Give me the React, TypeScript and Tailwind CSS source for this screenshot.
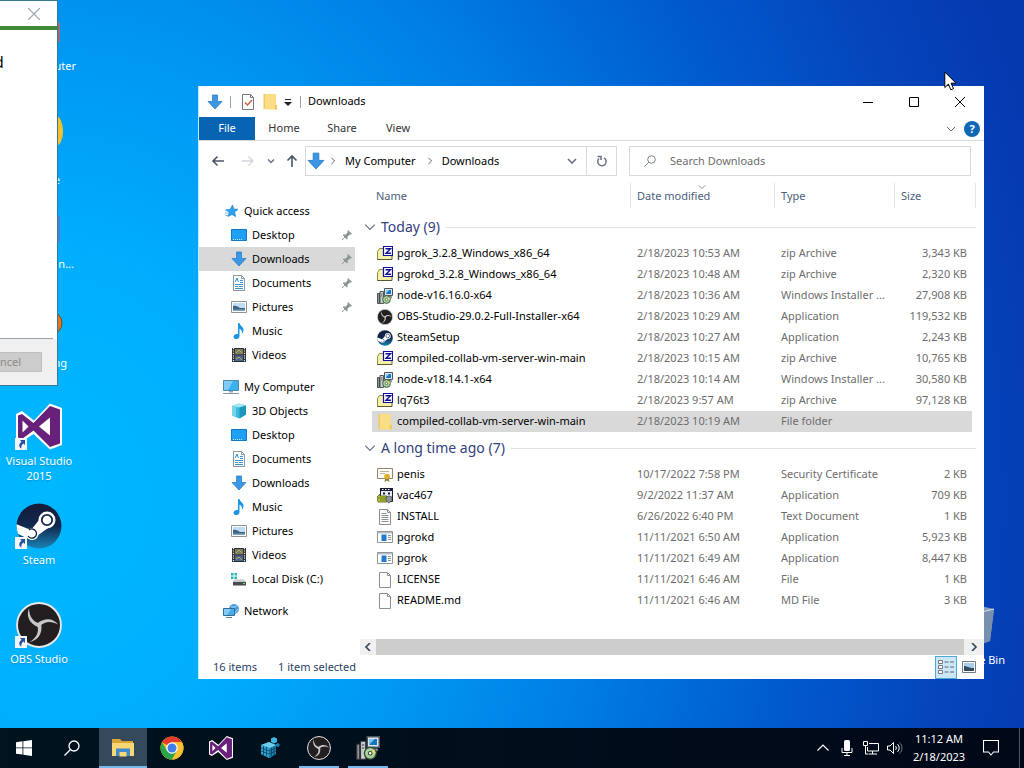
import type { ReactNode } from 'react'

type IconProps = { className?: string }

/* ---------- small icons ---------- */

function DownArrow({ className = 'h-4 w-4' }: IconProps) {
  return (
    <svg viewBox="0 0 16 16" className={className}>
      <path d="M5.500 1h5v6.500H15L8 15 1 7.500h4.500z" fill="#3b97e3" stroke="#2b7fc9" strokeWidth=".8" />
    </svg>
  )
}

function FolderIcon() {
  return (
    <svg viewBox="0 0 16 16" className="h-4 w-4">
      <path d="M1.500 0h11v15h-11z" fill="#f1c861" />
      <path d="M3 0h11v15.500H3z" fill="#fbdd85" />
      <path d="M12.500 11H15v4.500h-2.500z" fill="#f1c861" />
    </svg>
  )
}

function StarIcon() {
  return (
    <svg viewBox="0 0 16 16" className="h-4 w-4">
      <path d="M9.500 2l1.200 4 4.300.3-3.400 2.700 1 4.500L9 11.500 5 13.500l1.200-4L3 6.800l4.300-.6z" fill="#2ba3ee" stroke="#2383cc" strokeWidth=".7" />
      <path d="M2 10h3M2.500 12.500H5M2 7.500h2" stroke="#6bbcee" strokeWidth="1" />
    </svg>
  )
}

function DesktopIcon() {
  return (
    <svg viewBox="0 0 16 16" className="h-4 w-4">
      <path d="M.5 2.500h15v11H.5z" fill="#1ea0f4" stroke="#1379c4" />
      <path d="M2 12.500h10" stroke="#bfe4ff" strokeDasharray="1 1" />
    </svg>
  )
}

function PageIcon({ lines }: { lines?: boolean }) {
  return (
    <svg viewBox="0 0 16 16" className="h-4 w-4">
      <path d="M2.500.5h8l3 3v12h-11z" fill="#fdfdfd" stroke="#8f8f8f" />
      <path d="M10.500.5v3h3" fill="none" stroke="#8f8f8f" />
      {lines && <path d="M4.500 4.500h5M4.500 6.500h7M4.500 8.500h7M4.500 10.500h7M4.500 12.500h7" stroke="#8a8f94" />}
    </svg>
  )
}

function DocumentIcon() {
  return (
    <svg viewBox="0 0 16 16" className="h-4 w-4">
      <path d="M2.500.5h8l3 3v12h-11z" fill="#fff" stroke="#8796a5" />
      <path d="M10.500.5v3h3" fill="none" stroke="#8796a5" />
      <path d="M4 7l2-4 1.500 4" fill="none" stroke="#2b8ad0" />
      <path d="M9 5.500h3M9 7.500h3M4 9.500h8M4 11.500h3M8 11.500h4M4 13.500h8" stroke="#3a93d3" />
    </svg>
  )
}

function PictureIcon() {
  return (
    <svg viewBox="0 0 16 16" className="h-4 w-4">
      <path d="M.5 2.500h15v11H.5z" fill="#fff" stroke="#919191" />
      <path d="M2 4h12v8H2z" fill="#bfdcf3" />
      <path d="M2 7c3-1 5 1 7 2h5v3H2z" fill="#3f627f" />
      <path d="M2 10.500h12V12H2z" fill="#7ea6c4" />
    </svg>
  )
}

function MusicIcon() {
  return (
    <svg viewBox="0 0 16 16" className="h-4 w-4">
      <path d="M7 0h1.500c.3 3 4 3.500 4 7 0 2-1 3-1.700 3.800.6-3-.6-4.300-2.300-5V13c0 1.700-1.500 3-3.300 3S2.500 15 2.500 13.700 4 11 6 11c.4 0 .7 0 1 .1z" fill="#1e96e6" />
    </svg>
  )
}

function VideoIcon() {
  return (
    <svg viewBox="0 0 16 16" className="h-4 w-4">
      <path d="M1 1h14v14H1z" fill="#2d2d30" />
      <path d="M4 2h8v5.500H4z" fill="#777b62" />
      <path d="M4 8.500h8V14H4z" fill="#4b6794" />
      <path d="M5 6l3-3 3 3M5 12l3-2 3 3" fill="none" stroke="#b7ab5b" />
      <path d="M2.500 1v14M13.500 1v14" stroke="#e8e8e8" strokeWidth="1.200" strokeDasharray="1.200 1.200" />
    </svg>
  )
}

function ComputerIcon() {
  return (
    <svg viewBox="0 0 16 16" className="h-4 w-4">
      <path d="M.5 1.500h15v10H.5z" fill="#3db0ee" stroke="#4b87ac" />
      <path d="M1 2h9l-5 9H1z" fill="#7fcdf7" />
      <path d="M6 12h4v1.500H6z" fill="#9ab" />
      <path d="M0 14.500h16" stroke="#8499a7" />
    </svg>
  )
}

function CubeIcon() {
  return (
    <svg viewBox="0 0 16 16" className="h-4 w-4">
      <path d="M1 3l7-2.500 7 2v9L8 15.500 1 12.500z" fill="#3dbbdc" />
      <path d="M1 3l7-2.500 7 2-6.500 2z" fill="#a4e6f3" />
      <path d="M8.500 4.500l6.500-2v9l-6.500 4z" fill="#1b96bd" />
      <path d="M1 3l4 1v10l-4-1.500z" fill="#79d4ea" />
    </svg>
  )
}

function DiskIcon() {
  return (
    <svg viewBox="0 0 16 16" className="h-4 w-4">
      <path d="M0 2h2.500v2.500H0zM3.500 2H6v2.500H3.500zM0 5.500h2.500V8H0zM3.500 5.500H6V8H3.500z" fill="#22b5b5" />
      <path d="M3 8.500h10l2 2.500H2z" fill="#c4c9cc" />
      <path d="M2 11h13v3.500H2z" fill="#454b4f" />
      <path d="M12 12.500h2" stroke="#6ee06e" />
    </svg>
  )
}

function NetworkIcon() {
  return (
    <svg viewBox="0 0 16 16" className="h-4 w-4">
      <circle cx="11" cy="6" r="5" fill="#4a9fd8" />
      <path d="M8 3.500c2 1 4 1 6-1M9 10c3 0 5-2 6-4" stroke="#b5dcf5" fill="none" />
      <path d="M.5 5.500h11v7H.5z" fill="#49aee8" stroke="#2c6e9e" />
      <path d="M1 6h7l-4 6H1z" fill="#86cdf4" />
      <path d="M3 14.500h6" stroke="#5b8099" />
    </svg>
  )
}

function PinIcon() {
  return (
    <svg viewBox="0 0 12 12" className="h-3 w-3">
      <path d="M7 1l4 4-1 .6-1.200-.2L6.500 7.800l.2 2L6 10.500 1.800 6.200l.7-.7 2 .2L6.700 3.300 6.400 2z" fill="#8b9499" />
      <path d="M4 8L1 11" stroke="#8b9499" />
    </svg>
  )
}

function ZipIcon() {
  return (
    <svg viewBox="0 0 16 16" className="h-4 w-4">
      <path d="M.5 5.500L2.500 2.500H7v11H.5z" fill="#f4f0a8" stroke="#8e8a48" />
      <path d="M3 5h11.500v8H3z" fill="#f4f0a8" />
      <path d="M.5 13.500h14.500V10" fill="none" stroke="#5c582c" />
      <path d="M6.500.5h9v9h-9z" fill="#fff" stroke="#10109c" strokeWidth="1.200" />
      <path d="M8.500 2.700h5L9 7.300h5" fill="none" stroke="#10109c" strokeWidth="1.400" />
    </svg>
  )
}

function InstallerIcon({ className = 'h-4 w-4' }: IconProps) {
  return (
    <svg viewBox="0 0 16 16" className={className}>
      <path d="M7.500.5h8v7h-8z" fill="#dfe5ea" stroke="#46545d" />
      <path d="M9 2h5v4H9z" fill="#1176c4" />
      <path d="M9 2h3.500L9 5.500z" fill="#7ccaf5" />
      <path d="M8.500 8.500h6v1.500h-6z" fill="#aab2b8" stroke="#4a555c" strokeWidth=".5" />
      <path d="M.5 5.500h2v10h-2z" fill="#8e979d" stroke="#333" strokeWidth=".8" />
      <path d="M3 3.500h3.500v12H3z" fill="#c9cfd3" stroke="#333" strokeWidth=".8" />
      <path d="M4 6h1.500M4 8h1.500" stroke="#333" strokeWidth=".7" />
      <circle cx="9.500" cy="11.500" r="3.900" fill="#a9cf9c" stroke="#355234" strokeWidth=".9" />
      <path d="M9.500 11.500l2.600-2.600 1.200 2.600z" fill="#eadb72" />
      <circle cx="9.500" cy="11.500" r="1.200" fill="#fff" stroke="#2d4d2d" strokeWidth=".7" />
    </svg>
  )
}

function CertificateIcon() {
  return (
    <svg viewBox="0 0 16 16" className="h-4 w-4">
      <path d="M.5 1.500h15v10H.5z" fill="#fffdf5" stroke="#96836a" />
      <path d="M3 4.500h9M3 6.500h5" stroke="#b9b1a6" />
      <path d="M8.500 10l-1 5 2.500-1.500 2.500 1.500-1-5z" fill="#8a7a33" />
      <circle cx="10" cy="9.500" r="2.800" fill="#e0ac2b" />
    </svg>
  )
}

function SetupIcon() {
  return (
    <svg viewBox="0 0 16 16" className="h-4 w-4">
      <path d="M3.500.5h12v13h-12z" fill="#e8ebef" stroke="#181c38" />
      <path d="M3 0h13v3H3z" fill="#181c38" />
      <path d="M5 1.500h1.500M8 1.500h1.500M11 1.500h1.500" stroke="#fff" />
      <path d="M6 4.500h2v2H6zM11 4.500h2v2h-2z" fill="#181c38" />
      <path d="M0 9l3-3v2h7v6H1z" fill="#bccb35" stroke="#4e5716" strokeWidth=".8" />
      <path d="M1 10h8M3 12h6" stroke="#666e20" />
      <path d="M9 9l3-1 3 1c0 3-1 5-3 6-2-1-3-3-3-6z" fill="#8e9499" stroke="#44484d" strokeWidth=".7" />
    </svg>
  )
}

function AppIcon() {
  return (
    <svg viewBox="0 0 16 16" className="h-4 w-4">
      <path d="M.5 1.500h15v11H.5z" fill="#fff" stroke="#8d959b" />
      <path d="M1 2h14v1.500H1z" fill="#b9c0c5" />
      <path d="M4.500 4.500h5v6.500h-5z" fill="#1f7ad0" />
      <path d="M11 5.500h3M11 7.500h3M11 9.500h3" stroke="#8d959b" />
    </svg>
  )
}

/* ---------- app logos ---------- */

function VisualStudioLogo({ className }: IconProps) {
  return (
    <svg viewBox="0 0 46 46" className={className}>
      <path d="M34 0l12 4.500v37L34 46 17.500 30.500 5.500 38.500 0 35.500V10.500L6 7.500l12 9.500z" fill="#fff" />
      <path d="M34 2.500l10 3.500v34l-10 3.500L17.500 27 6 35.500l-4-1.500V12l4-1.500 11.500 9z" fill="#68217a" />
      <path d="M34 14v18L23 23zM6.500 17v12l6-6z" fill="#fff" />
    </svg>
  )
}

function SteamLogo({ className }: IconProps) {
  return (
    <svg viewBox="0 0 46 46" className={className}>
      <defs>
        <linearGradient id="steam" x1="0" y1="0" x2="0" y2="1">
          <stop offset="0" stopColor="#161c3a" />
          <stop offset=".5" stopColor="#10284f" />
          <stop offset="1" stopColor="#1a86b8" />
        </linearGradient>
        <clipPath id="steam-clip">
          <circle cx="23" cy="23" r="22.500" />
        </clipPath>
      </defs>
      <g clipPath="url(#steam-clip)">
        <path d="M0 0h46v46H0z" fill="url(#steam)" />
        <path d="M0 21l15 6 8-10 9 8-11 8-6 4-15-7z" fill="#fff" />
        <circle cx="31" cy="17" r="8.500" fill="#fff" />
        <circle cx="31" cy="17" r="5.200" fill="#fff" stroke="#14264b" strokeWidth="1.800" />
        <circle cx="16.500" cy="31" r="6" fill="#fff" />
        <path d="M13 27a4.600 4.600 0 1 1-1 6" fill="none" stroke="#14264b" strokeWidth="1.300" />
      </g>
    </svg>
  )
}

function ObsLogo({ className }: IconProps) {
  const blade = 'M12.500 6C9.500 13 12.500 20.500 21 24L23 20.500C16.500 19.500 12.500 14 12.500 6z'
  return (
    <svg viewBox="0 0 44 44" className={className}>
      <circle cx="22" cy="22" r="21" fill="#231f20" stroke="#e8e8e8" strokeWidth="1.800" />
      <g fill="#c9c7c7">
        <path d={blade} />
        <path d={blade} transform="rotate(120 22 22)" />
        <path d={blade} transform="rotate(240 22 22)" />
      </g>
    </svg>
  )
}

function ChromeLogo({ className }: IconProps) {
  return (
    <svg viewBox="0 0 48 48" className={className}>
      <circle cx="24" cy="24" r="23" fill="#fbc02d" />
      <path d="M24 24L4.100 12.500A23 23 0 0 1 43.900 12.500H24z" fill="#e33b2e" />
      <path d="M4.100 12.500A23 23 0 0 0 24 47L34 29.700 24 24 14 29.700z" fill="#2ba24c" />
      <path d="M24 47A23 23 0 0 0 43.900 12.500H24l10 17.200z" fill="#fbc02d" />
      <circle cx="24" cy="24" r="11.500" fill="#fff" />
      <circle cx="24" cy="24" r="9" fill="#3f7de8" />
    </svg>
  )
}

function ExplorerLogo() {
  return (
    <svg viewBox="0 0 24 24" className="h-6 w-6">
      <path d="M1 3h8l2 2h11v4H1z" fill="#d9a43a" />
      <path d="M1 7h22v13H1z" fill="#f9d775" />
      <path d="M5 12.500h14V20H5z" fill="#3f8ccb" />
      <path d="M8.500 16h7v4.500h-7z" fill="#f9d775" />
    </svg>
  )
}

function RegistryLogo() {
  return (
    <svg viewBox="0 0 24 24" className="h-6 w-6">
      <path d="M3 9l8-3 7 3v9l-6 4-9-4z" fill="#1a7fae" />
      <path d="M3 9l8-3 7 3-6 3z" fill="#6ecdec" />
      <path d="M3 9l8 3v10l-8-4z" fill="#2fa4d3" />
      <path d="M3 12l8 3 7-3M3 15l8 3 7-3M5.500 10v9M8.500 11v9M13.500 11.500v9M16 10.500v9" stroke="#0c405f" strokeWidth=".8" fill="none" />
      <path d="M13 2.500L16 1l3 1.500V6l-3 1.500L13 6z" fill="#3bb5e2" />
      <path d="M18 8l2-1 1.500 1v2L20 11l-2-1z" fill="#1a7fae" />
    </svg>
  )
}

function ShortcutArrow() {
  return (
    <svg viewBox="0 0 12 12" className="absolute bottom-0 -left-px h-3 w-3">
      <path d="M0 0h12v12H0z" fill="#f4f7fa" />
      <path d="M5 2h5v5L8.300 5.500C6.500 7 6 8.500 6.500 10.500 3.500 9 3.500 6 6.500 3.700z" fill="#27509e" />
    </svg>
  )
}

function Chevron({ className = '', d = 'M1 3l4 4 4-4' }: IconProps & { d?: string }) {
  return (
    <svg viewBox="0 0 10 10" className={className} fill="none" stroke="currentColor">
      <path d={d} />
    </svg>
  )
}

/* ---------- data ---------- */

type FileRow = {
  name: string
  date: string
  type: string
  size: string
  icon: ReactNode
  selected?: boolean
}

const groups: { title: string; rows: FileRow[] }[] = [
  {
    title: 'Today (9)',
    rows: [
      { name: 'pgrok_3.2.8_Windows_x86_64', date: '2/18/2023 10:53 AM', type: 'zip Archive', size: '3,343 KB', icon: <ZipIcon /> },
      { name: 'pgrokd_3.2.8_Windows_x86_64', date: '2/18/2023 10:48 AM', type: 'zip Archive', size: '2,320 KB', icon: <ZipIcon /> },
      { name: 'node-v16.16.0-x64', date: '2/18/2023 10:36 AM', type: 'Windows Installer ...', size: '27,908 KB', icon: <InstallerIcon /> },
      { name: 'OBS-Studio-29.0.2-Full-Installer-x64', date: '2/18/2023 10:29 AM', type: 'Application', size: '119,532 KB', icon: <ObsLogo className="h-4 w-4" /> },
      { name: 'SteamSetup', date: '2/18/2023 10:27 AM', type: 'Application', size: '2,243 KB', icon: <SteamLogo className="h-4 w-4" /> },
      { name: 'compiled-collab-vm-server-win-main', date: '2/18/2023 10:15 AM', type: 'zip Archive', size: '10,765 KB', icon: <ZipIcon /> },
      { name: 'node-v18.14.1-x64', date: '2/18/2023 10:14 AM', type: 'Windows Installer ...', size: '30,580 KB', icon: <InstallerIcon /> },
      { name: 'lq76t3', date: '2/18/2023 9:57 AM', type: 'zip Archive', size: '97,128 KB', icon: <ZipIcon /> },
      { name: 'compiled-collab-vm-server-win-main', date: '2/18/2023 10:19 AM', type: 'File folder', size: '', icon: <FolderIcon />, selected: true },
    ],
  },
  {
    title: 'A long time ago (7)',
    rows: [
      { name: 'penis', date: '10/17/2022 7:58 PM', type: 'Security Certificate', size: '2 KB', icon: <CertificateIcon /> },
      { name: 'vac467', date: '9/2/2022 11:37 AM', type: 'Application', size: '709 KB', icon: <SetupIcon /> },
      { name: 'INSTALL', date: '6/26/2022 6:40 PM', type: 'Text Document', size: '1 KB', icon: <PageIcon lines /> },
      { name: 'pgrokd', date: '11/11/2021 6:50 AM', type: 'Application', size: '5,923 KB', icon: <AppIcon /> },
      { name: 'pgrok', date: '11/11/2021 6:49 AM', type: 'Application', size: '8,447 KB', icon: <AppIcon /> },
      { name: 'LICENSE', date: '11/11/2021 6:46 AM', type: 'File', size: '1 KB', icon: <PageIcon /> },
      { name: 'README.md', date: '11/11/2021 6:46 AM', type: 'MD File', size: '3 KB', icon: <PageIcon /> },
    ],
  },
]

type NavItem = { label: string; icon: ReactNode; pinned?: boolean; active?: boolean }

const navSections: { root: NavItem; items: NavItem[] }[] = [
  {
    root: { label: 'Quick access', icon: <StarIcon /> },
    items: [
      { label: 'Desktop', icon: <DesktopIcon />, pinned: true },
      { label: 'Downloads', icon: <DownArrow />, pinned: true, active: true },
      { label: 'Documents', icon: <DocumentIcon />, pinned: true },
      { label: 'Pictures', icon: <PictureIcon />, pinned: true },
      { label: 'Music', icon: <MusicIcon /> },
      { label: 'Videos', icon: <VideoIcon /> },
    ],
  },
  {
    root: { label: 'My Computer', icon: <ComputerIcon /> },
    items: [
      { label: '3D Objects', icon: <CubeIcon /> },
      { label: 'Desktop', icon: <DesktopIcon /> },
      { label: 'Documents', icon: <DocumentIcon /> },
      { label: 'Downloads', icon: <DownArrow /> },
      { label: 'Music', icon: <MusicIcon /> },
      { label: 'Pictures', icon: <PictureIcon /> },
      { label: 'Videos', icon: <VideoIcon /> },
      { label: 'Local Disk (C:)', icon: <DiskIcon /> },
    ],
  },
  { root: { label: 'Network', icon: <NetworkIcon /> }, items: [] },
]

/* ---------- explorer ---------- */

function TitleBar() {
  return (
    <header className="flex h-[31px] items-center pr-px pl-2">
      <DownArrow className="h-4 w-4" />
      <span className="ml-[7px] h-3 w-px bg-gray-400" />
      <button type="button" aria-label="Properties" className="ml-[9px]">
        <svg viewBox="0 0 16 16" className="h-4 w-4">
          <path d="M2.500.5h8l3 3v12h-11z" fill="#fff" stroke="#777" />
          <path d="M10.500.5v3h3" fill="none" stroke="#777" />
          <path d="M5 8.500l2.500 2.500L12 6" fill="none" stroke="#c9623e" strokeWidth="1.500" />
        </svg>
      </button>
      <button type="button" aria-label="New folder" className="ml-[6px]">
        <FolderIcon />
      </button>
      <button type="button" aria-label="Customize toolbar" className="ml-[6px]">
        <svg viewBox="0 0 8 8" className="h-2 w-2">
          <path d="M1 1.500h6" stroke="#222" />
          <path d="M0 4h8L4 8z" fill="#222" />
        </svg>
      </button>
      <span className="ml-2 h-3 w-px bg-gray-400" />
      <h1 className="ml-[7px] flex-1 text-black">Downloads</h1>
      <div className="flex items-center text-black">
        {[
          ['Minimize', 'M0 5.500h10'],
          ['Maximize', 'M.5.5h9v9h-9z'],
          ['Close', 'M0 0l10 10M10 0L0 10'],
        ].map(([label, d]) => (
          <button key={label} type="button" aria-label={label} className="flex h-[31px] w-[46px] items-center justify-center">
            <Chevron className="h-[10px] w-[10px]" d={d} />
          </button>
        ))}
      </div>
    </header>
  )
}

function RibbonTabs() {
  return (
    <nav className="flex h-6 items-stretch border-b border-[#dadbdc]">
      <button type="button" className="w-14 bg-[#0764b3] text-white">File</button>
      <button type="button" className="w-[58px] text-[#333]">Home</button>
      <button type="button" className="w-[58px] text-[#333]">Share</button>
      <button type="button" className="w-[54px] text-[#333]">View</button>
      <div className="ml-auto flex items-center gap-2 pr-1">
        <Chevron className="h-[10px] w-[10px] text-gray-500" />
        <button type="button" aria-label="Help" className="h-4 w-4 rounded-full bg-[#0f68b5] text-center font-bold text-white">
          ?
        </button>
      </div>
    </nav>
  )
}

function AddressBar() {
  return (
    <div className="flex h-[42px] items-start pt-[5px] pr-[13px]">
      <div className="flex h-[30px] w-[106px] shrink-0 items-center pl-3 text-gray-600">
        <button type="button" aria-label="Back">
          <svg viewBox="0 0 14 14" className="h-[14px] w-[14px]" fill="none" stroke="currentColor" strokeWidth="1.600">
            <path d="M13 7H2M6.500 2.500L2 7l4.500 4.500" />
          </svg>
        </button>
        <button type="button" aria-label="Forward" className="ml-4 text-gray-300">
          <svg viewBox="0 0 14 14" className="h-[14px] w-[14px]" fill="none" stroke="currentColor" strokeWidth="1.300">
            <path d="M1 7h11M7.500 2.500L12 7l-4.500 4.500" />
          </svg>
        </button>
        <button type="button" aria-label="Recent locations" className="ml-3 text-gray-500">
          <svg viewBox="0 0 8 8" className="h-2 w-2" fill="none" stroke="currentColor" strokeWidth="1.500">
            <path d="M1 2.500l3 3 3-3" />
          </svg>
        </button>
        <button type="button" aria-label="Up" className="ml-[10px]">
          <svg viewBox="0 0 14 14" className="h-[14px] w-[14px]" fill="none" stroke="currentColor" strokeWidth="1.600">
            <path d="M7 13V2M2.500 6.500L7 2l4.500 4.500" />
          </svg>
        </button>
      </div>
      <div className="flex h-[30px] w-[312px] items-center border border-[#d9d9d9] text-black">
        <DownArrow className="ml-px h-[18px] w-[18px]" />
        <Chevron className="ml-1 h-2 w-2 text-gray-700" d="M3 1l4 4-4 4" />
        <button type="button" className="ml-2">My Computer</button>
        <Chevron className="ml-[10px] h-2 w-2 text-gray-700" d="M3 1l4 4-4 4" />
        <button type="button" className="ml-2">Downloads</button>
        <button type="button" aria-label="Previous locations" className="mr-[9px] ml-auto text-gray-500">
          <svg viewBox="0 0 10 10" className="h-[10px] w-[10px]" fill="none" stroke="currentColor" strokeWidth="1.600">
            <path d="M1 3l4 4 4-4" />
          </svg>
        </button>
        <button type="button" aria-label="Refresh" className="flex h-full w-[30px] items-center justify-center border-l border-[#d9d9d9] text-gray-500">
          <svg viewBox="0 0 12 12" className="h-3 w-3" fill="none" stroke="currentColor" strokeWidth="1.500">
            <path d="M3 3.500A4.200 4.200 0 1 0 8 2.800" />
            <path d="M1.500 1.500h3.500V5" />
          </svg>
        </button>
      </div>
      <label className="ml-3 flex h-[30px] flex-1 items-center border border-[#d9d9d9] pl-[14px] text-gray-500">
        <svg viewBox="0 0 12 12" className="h-3 w-3 shrink-0" fill="none" stroke="currentColor" strokeWidth=".9">
          <circle cx="7.500" cy="4.500" r="3.800" />
          <path d="M4.700 7.300L.5 11.500" />
        </svg>
        <input type="search" aria-label="Search Downloads" placeholder="Search Downloads" className="ml-[14px] w-full bg-transparent outline-none placeholder:text-[#6d6d6d]" />
      </label>
    </div>
  )
}

function NavPane() {
  return (
    <nav className="flex w-[161px] shrink-0 flex-col gap-2 pt-4 pr-[5px] text-black">
      {navSections.map((section) => (
        <div key={section.root.label}>
          <a href="#" className="flex h-6 items-center gap-[5px] pl-6">
            {section.root.icon}
            {section.root.label}
          </a>
          {section.items.map((item) => (
            <a key={item.label} href="#" className={`flex h-6 items-center gap-[5px] pr-[2px] pl-8 ${item.active ? 'bg-[#d9d9d9]' : ''}`}>
              {item.icon}
              <span className="flex-1">{item.label}</span>
              {item.pinned && <PinIcon />}
            </a>
          ))}
        </div>
      ))}
    </nav>
  )
}

function FileTable() {
  return (
    <table className="ml-3 table-fixed border-collapse text-left text-[#6d6d6d]">
      <colgroup>
        <col />
        <col className="w-36" />
        <col className="w-[120px]" />
        <col className="w-[77px]" />
        <col className="w-1" />
      </colgroup>
      <thead className="text-[#4c607a]">
        <tr className="h-7 align-top">
          <th className="p-0 font-normal">
            <div className="h-[25px] border-r border-[#e5e5e5] pl-1 leading-[25px]">Name</div>
          </th>
          <th className="relative p-0 font-normal">
            <Chevron className="absolute top-0 left-[67px] h-2 w-2 text-gray-500" />
            <div className="h-[25px] border-r border-[#e5e5e5] pl-[6px] leading-[25px]">Date modified</div>
          </th>
          <th className="p-0 font-normal">
            <div className="h-[25px] border-r border-[#e5e5e5] pl-[6px] leading-[25px]">Type</div>
          </th>
          <th className="p-0 font-normal">
            <div className="h-[25px] pl-[6px] leading-[25px]">Size</div>
          </th>
          <td className="p-0">
            <div className="h-[25px] border-r border-[#e5e5e5]" />
          </td>
        </tr>
      </thead>
      {groups.map((group) => (
        <tbody key={group.title}>
          <tr className="h-8">
            <th colSpan={5} className="p-0 font-normal">
              <div className="-ml-2 flex items-center text-sm text-[#33417e]">
                <Chevron className="mr-[5px] h-3 w-3 text-gray-500" />
                {group.title}
                <span className="ml-[6px] h-px flex-1 bg-[#e2e2e2]" />
              </div>
            </th>
          </tr>
          {group.rows.map((row) => (
            <tr key={row.name + row.date} className="h-[21px]">
              <td className={`p-0 ${row.selected ? 'bg-[#d9d9d9]' : ''}`}>
                <div className="flex items-center gap-1 pl-[5px] text-black">
                  {row.icon}
                  {row.name}
                </div>
              </td>
              <td className={`p-0 pl-[6px] ${row.selected ? 'bg-[#d9d9d9]' : ''}`}>{row.date}</td>
              <td className={`p-0 pl-[6px] whitespace-nowrap ${row.selected ? 'bg-[#d9d9d9]' : ''}`}>{row.type}</td>
              <td className={`p-0 pr-[5px] text-right ${row.selected ? 'bg-[#d9d9d9]' : ''}`}>{row.size}</td>
              <td className="p-0" />
            </tr>
          ))}
        </tbody>
      ))}
    </table>
  )
}

function ExplorerWindow() {
  return (
    <section className="absolute top-[86px] right-10 left-[198px] border-l border-[#b5f0ff] bg-white">
      <TitleBar />
      <RibbonTabs />
      <AddressBar />
      <div className="flex">
        <NavPane />
        <div className="flex min-w-0 flex-1 flex-col">
          <div className="grid pr-2">
            <FileTable />
          </div>
          <div className="mt-7 flex h-4 bg-[#f0f0f0] text-gray-700">
            <button type="button" aria-label="Scroll left" className="flex w-4 items-center justify-center">
              <svg viewBox="0 0 8 8" className="h-2 w-2" fill="none" stroke="currentColor" strokeWidth="1.600">
                <path d="M6 0L2 4l4 4" />
              </svg>
            </button>
            <div className="flex-1 bg-[#cdcdcd]" />
            <button type="button" aria-label="Scroll right" className="flex w-5 items-center justify-center">
              <svg viewBox="0 0 8 8" className="h-2 w-2" fill="none" stroke="currentColor" strokeWidth="1.600">
                <path d="M2 0l4 4-4 4" />
              </svg>
            </button>
          </div>
        </div>
      </div>
      <footer className="flex h-6 items-center pr-[6px] pl-[14px] text-[#2c3f64]">
        <span>16 items</span>
        <span className="ml-[21px] flex-1">1 item selected</span>
        <button type="button" aria-label="Details view" className="flex h-[23px] w-[22px] items-center justify-center border border-[#4fa8d8] bg-[#cce8f8]">
          <svg viewBox="0 0 16 14" className="h-[14px] w-4" fill="none">
            <path d="M.5.5h4v3h-4zM.5 5.500h4v3h-4zM.5 10.500h4v3h-4z" fill="#fff" stroke="#777" />
            <path d="M6.500 2h4M6.500 7h4M6.500 12h4M12 2h4M12 7h4M12 12h4" stroke="#5b6670" />
          </svg>
        </button>
        <button type="button" aria-label="Large icons view" className="ml-[3px] flex w-[18px] justify-center">
          <svg viewBox="0 0 14 12" className="h-3 w-[14px]">
            <path d="M.5.5h13v11H.5z" fill="#fff" stroke="#6f7a86" />
            <path d="M2 2h10v8H2z" fill="#a9cdea" />
            <path d="M2 5c3 0 4 2 10 2v3H2z" fill="#2f4a63" />
          </svg>
        </button>
      </footer>
    </section>
  )
}

/* ---------- desktop ---------- */

function InstallerDialog() {
  return (
    <section className="absolute top-0 left-0 flex h-[386px] w-[58px] flex-col overflow-hidden border-t border-r border-b border-[#3a7896] bg-white">
      <div className="flex h-[25px] items-center justify-end pr-[17px]">
        <button type="button" aria-label="Close dialog" className="text-gray-400">
          <Chevron className="h-3 w-3" d="M0 0l10 10M10 0L0 10" />
        </button>
      </div>
      <div className="h-1 bg-[#3f8b34]" />
      <p className="-ml-[6px] flex-1 pt-5 font-['Open_Sans',sans-serif] text-base text-black">d</p>
      <div className="mr-1 h-px bg-gray-400" />
      <div className="flex h-[46px] items-center justify-end bg-[#f0f0f0] pr-[15px]">
        <button type="button" disabled className="h-5 w-[76px] shrink-0 border border-[#bfbfbf] bg-[#cccccc] text-[#8a8a8a]">
          Cancel
        </button>
      </div>
    </section>
  )
}

function Shortcut({ label, logo, className }: { label: string; logo: ReactNode; className: string }) {
  return (
    <button type="button" className={`absolute left-0 flex w-[78px] flex-col items-center gap-[3px] text-white ${className}`}>
      <span className="relative">
        {logo}
        <ShortcutArrow />
      </span>
      <span className="w-full px-1 leading-[15px] text-shadow-sm">{label}</span>
    </button>
  )
}

function Desktop() {
  return (
    <main className="relative flex-1 overflow-hidden">
      {/* shortcuts that peek out from behind the dialog */}
      <svg viewBox="0 0 10 330" className="absolute top-4 left-[55px] h-[330px] w-[10px]">
        <path d="M0 6h5v20H0z" fill="#777f99" />
        <path d="M3 8h1v17H3z" fill="#bf5a4a" />
        <ellipse cx="1" cy="115" rx="7" ry="15" fill="#f3c32f" />
        <path d="M0 200h5v26H0z" fill="#4c83cf" />
        <circle cx="-5" cy="307" r="12" fill="#e07a22" stroke="#6b4a2a" />
      </svg>
      <div className="absolute top-[58px] left-0 w-[76px] text-right leading-4 text-white">My Computer</div>
      <div className="absolute top-[172px] left-0 w-[60px] text-right leading-4 text-white">Chrome</div>
      <div className="absolute top-[256px] left-0 w-[74px] text-right leading-4 text-white">n...</div>
      <div className="absolute top-[355px] left-0 w-[67px] text-right leading-4 text-white">ng</div>

      <Shortcut label="Visual Studio 2015" logo={<VisualStudioLogo className="h-[47px] w-[46px]" />} className="top-[403px]" />
      <Shortcut label="Steam" logo={<SteamLogo className="h-[46px] w-[46px]" />} className="top-[503px]" />
      <Shortcut label="OBS Studio" logo={<ObsLogo className="h-[46px] w-[46px]" />} className="top-[602px]" />

      <svg viewBox="0 0 36 40" className="absolute top-[606px] right-[30px] h-10 w-9">
        <path d="M2 3l20-3 14 3-4 32-12 4L6 36z" fill="#8d9db4" />
        <path d="M24 5l12-2-4 32-8 3z" fill="#7790ae" />
        <path d="M2 3l22 3 12-3" fill="none" stroke="#d6e0ea" />
      </svg>
      <div className="absolute top-[652px] right-[19px] leading-4 text-white">Recycle Bin</div>

      <InstallerDialog />
      <ExplorerWindow />

      <svg viewBox="0 0 13 20" className="absolute top-[71px] left-[944px] h-5 w-[13px]">
        <path d="M.8 1v15.500l3.600-3.400 2.400 5.700 2.700-1.200-2.400-5.400H12z" fill="#fff" stroke="#000" />
      </svg>
    </main>
  )
}

function TaskButton({ label, children, state = '' }: { label: string; children: ReactNode; state?: string }) {
  return (
    <button type="button" aria-label={label} className={`flex h-10 w-12 flex-col items-center justify-center ${state === 'active' ? 'bg-[#34495a]' : ''}`}>
      <span className="flex flex-1 items-center pt-[2px]">{children}</span>
      <span className={`h-[2px] ${state === 'active' ? 'w-12 bg-[#76b9ed]' : ''} ${state === 'open' ? 'w-10 bg-[#76b9ed]' : ''}`} />
    </button>
  )
}

function Taskbar() {
  return (
    <footer className="flex h-10 items-center bg-linear-to-r from-[#00131f] to-[#010818] text-white">
      <TaskButton label="Start">
        <svg viewBox="0 0 16 16" className="h-4 w-4" fill="#fff">
          <path d="M0 2.200l6.500-.9v6.200H0zM7.300 1.200L16 0v7.500H7.300zM0 8.300h6.500v6.300L0 13.700zM7.300 8.300H16V16l-8.700-1.200z" />
        </svg>
      </TaskButton>
      <TaskButton label="Search">
        <svg viewBox="0 0 16 16" className="h-4 w-4" fill="none" stroke="#fff" strokeWidth="1.300">
          <circle cx="10" cy="6" r="5" />
          <path d="M6.500 9.500L.5 15.500" />
        </svg>
      </TaskButton>
      <div className="ml-[3px] flex gap-px">
        <TaskButton label="File Explorer" state="active"><ExplorerLogo /></TaskButton>
        <TaskButton label="Google Chrome"><ChromeLogo className="h-6 w-6" /></TaskButton>
        <TaskButton label="Visual Studio"><VisualStudioLogo className="h-6 w-6" /></TaskButton>
        <TaskButton label="Registry Editor"><RegistryLogo /></TaskButton>
        <TaskButton label="OBS Studio" state="open"><ObsLogo className="h-6 w-6" /></TaskButton>
        <TaskButton label="Installer" state="open"><InstallerIcon className="h-6 w-6" /></TaskButton>
      </div>
      <div className="ml-auto flex h-full items-center">
        <button type="button" aria-label="Show hidden icons" className="w-6">
          <svg viewBox="0 0 12 12" className="mx-auto h-3 w-3" fill="none" stroke="#fff" strokeWidth="1.200">
            <path d="M.5 8.500L6 3l5.500 5.500" />
          </svg>
        </button>
        <button type="button" aria-label="Microphone" className="w-6">
          <svg viewBox="0 0 12 16" className="mx-auto h-4 w-3" fill="none" stroke="#fff">
            <rect x="3" y="0" width="6" height="11" rx="1.500" fill="#fff" stroke="none" />
            <path d="M1 8v4.500h10V8M6 13v3M3 15.500h6" />
          </svg>
        </button>
        <button type="button" aria-label="Network status" className="w-6">
          <svg viewBox="0 0 16 14" className="mx-auto h-[14px] w-4" fill="none" stroke="#fff">
            <path d="M6 2.500h9.500v7.500h-11V6M9.500 10v3M6 13h8" />
            <path d="M.5.500h4v4h-4zM2.500 4.500V13h3" />
          </svg>
        </button>
        <button type="button" aria-label="Volume" className="w-6">
          <svg viewBox="0 0 16 14" className="mx-auto h-[14px] w-4" fill="none" stroke="#fff">
            <path d="M.5 5v4h2.500l3.500 3.500v-11L3 5zM8.500 5c1 1 1 3 0 4M10.500 3.200c2.200 2 2.200 5.500 0 7.600" />
            <path d="M12.500 1.500c3.300 3 3.300 8 0 11" stroke="#6c7680" />
          </svg>
        </button>
        <time className="mr-[2px] w-16 text-center leading-[18px]">
          11:12 AM
          <br />
          2/18/2023
        </time>
        <button type="button" aria-label="Notifications" className="w-9">
          <svg viewBox="0 0 16 16" className="mx-auto h-4 w-4" fill="none" stroke="#fff" strokeWidth="1.100">
            <path d="M.5.5h15v11.500h-5L8 15l-2.500-3h-5z" />
          </svg>
        </button>
        <span className="mr-1 ml-[10px] h-full w-px bg-gray-600" />
      </div>
    </footer>
  )
}

export default function App() {
  return (
    <div className="flex h-screen min-h-[768px] flex-col overflow-hidden bg-[radial-gradient(ellipse_100%_160%_at_5%_65%,#00b8ff_0%,#00aefe_20%,#0096f2_38%,#007fe4_53%,#005ccf_72%,#0545bc_88%,#0539b0_100%)] font-['Noto_Sans','Open_Sans',sans-serif] text-[11px]">
      <Desktop />
      <Taskbar />
    </div>
  )
}
